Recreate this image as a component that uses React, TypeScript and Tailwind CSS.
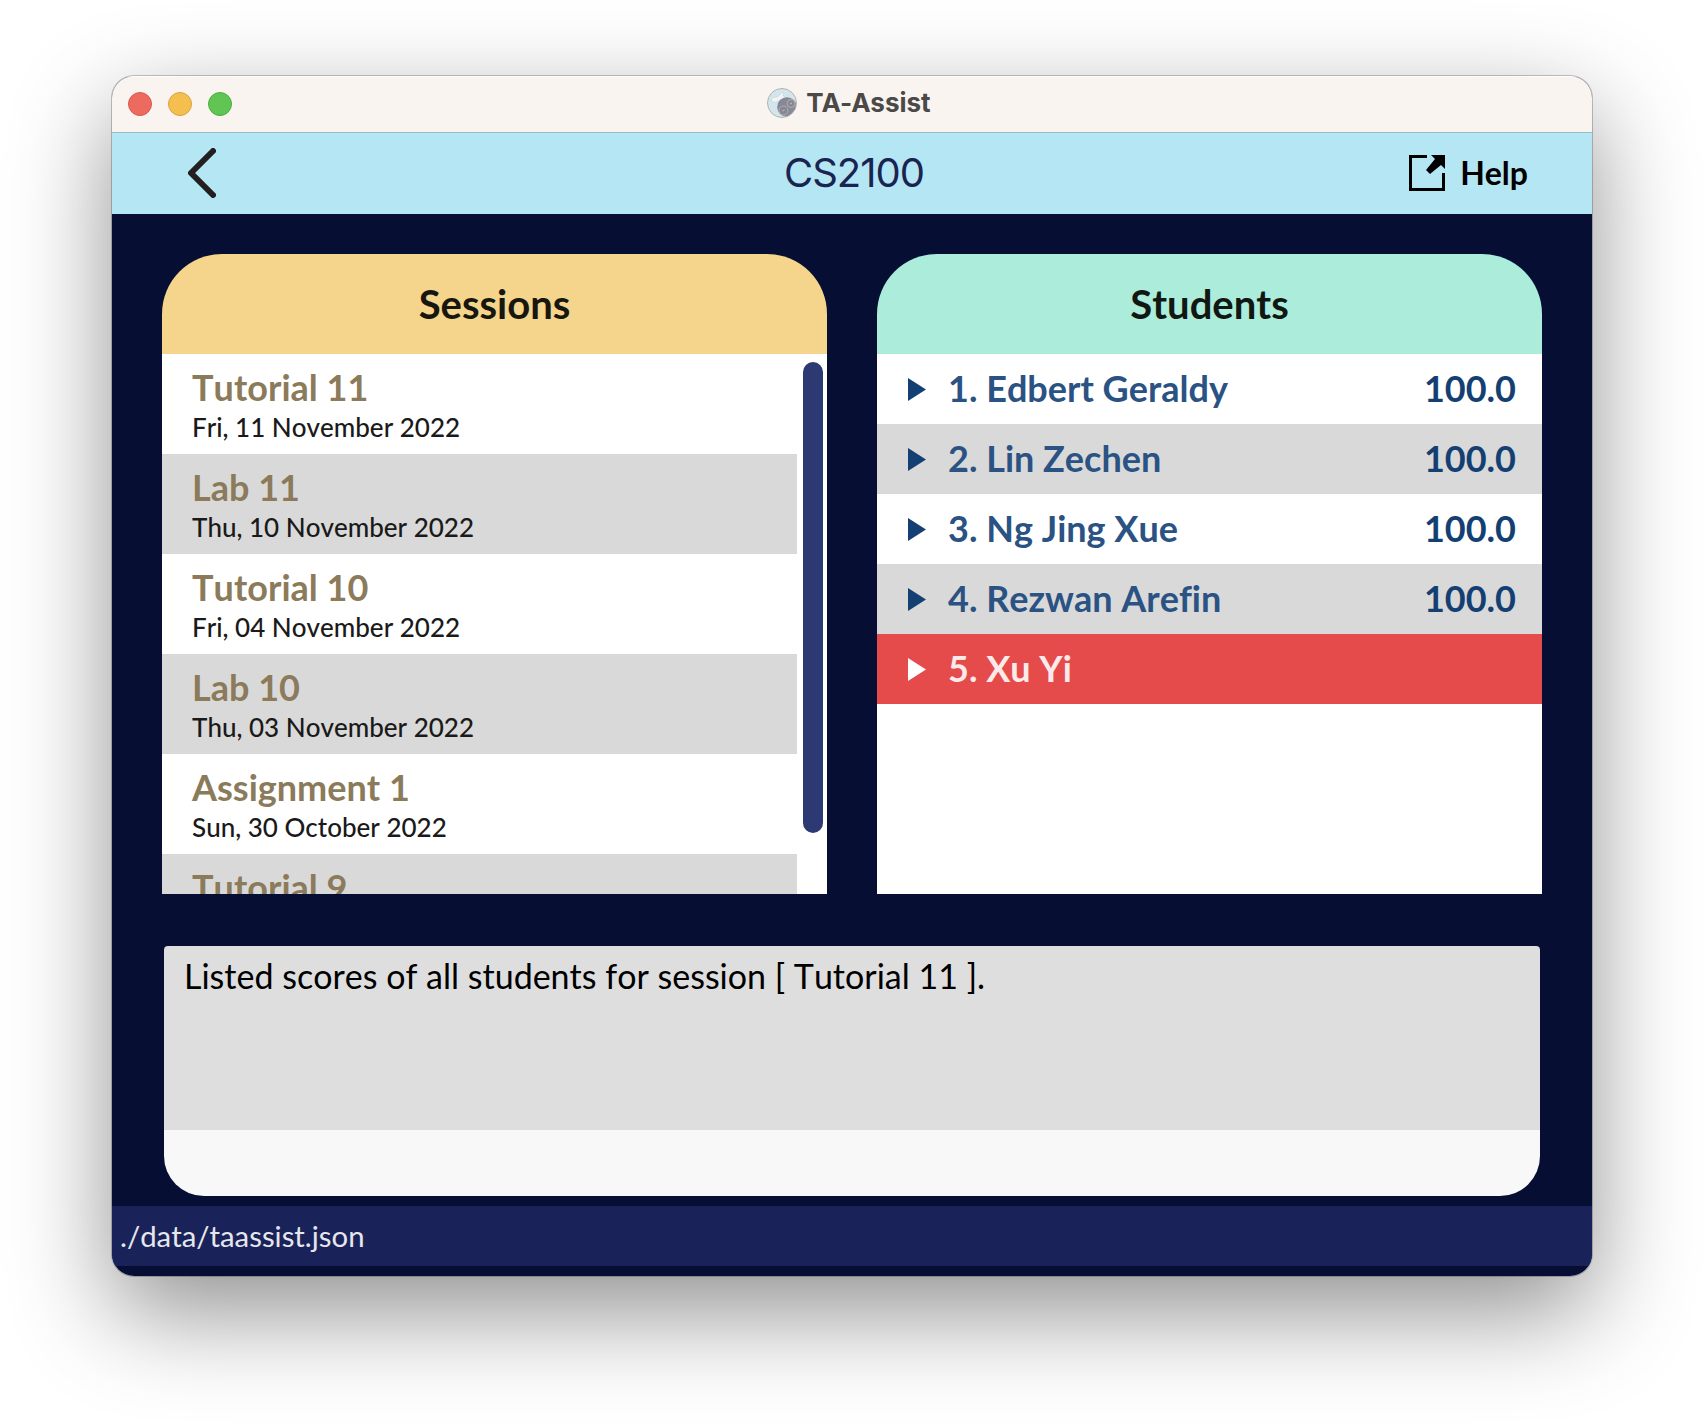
const sessions = [
  { name: "Tutorial 11", date: "Fri, 11 November 2022" },
  { name: "Lab 11", date: "Thu, 10 November 2022" },
  { name: "Tutorial 10", date: "Fri, 04 November 2022" },
  { name: "Lab 10", date: "Thu, 03 November 2022" },
  { name: "Assignment 1", date: "Sun, 30 October 2022" },
  { name: "Tutorial 9", date: "" },
];

const students = [
  { name: "Edbert Geraldy", score: "100.0" },
  { name: "Lin Zechen", score: "100.0" },
  { name: "Ng Jing Xue", score: "100.0" },
  { name: "Rezwan Arefin", score: "100.0" },
  { name: "Xu Yi", score: "" },
];

function AppLogo() {
  return (
    <svg className="h-8 w-8" viewBox="0 0 32 32">
      <defs>
        <clipPath id="disc">
          <circle cx="16" cy="16" r="14.5" />
        </clipPath>
      </defs>
      <circle cx="16" cy="16" r="14.5" fill="#d3e6eb" />
      <g clipPath="url(#disc)">
        <path d="M14 33 33 15v18z" fill="#f5e3b5" />
        <path d="M5.500 12c2-3 5-1 7-3 2-1 2-4 4-4 2 1 0 3 1 4 2 1 2 3-1 3.500-3 0-4 2-6 2.500-3 1-5 0-5-3z" fill="#eff4f5" stroke="#c0ced3" strokeWidth=".6" />
        <circle cx="21" cy="20" r="9.800" fill="#85879a" />
        <circle cx="25" cy="16.500" r="4" fill="none" stroke="#bdae96" strokeWidth="1" />
        <circle cx="17.500" cy="23.500" r="4.500" fill="none" stroke="#bdae96" strokeWidth="1" />
        <path d="m24 17 2-1M16.500 24l2-1" stroke="#c5c3c4" strokeWidth="1" />
      </g>
      <circle cx="16" cy="16" r="14.500" fill="none" stroke="#b0b2b5" strokeWidth="1" />
    </svg>
  );
}

function TitleBar() {
  return (
    <div className="grid h-14 grid-cols-3 items-center bg-[#faf4f1] shadow-[inset_0_1px_0_#ffffff]">
      <div className="flex gap-4 pl-4">
        <span className="h-6 w-6 rounded-full border border-[#d8584e] bg-[#ed6a5e]" />
        <span className="h-6 w-6 rounded-full border border-[#d8a13a] bg-[#f5bf4f]" />
        <span className="h-6 w-6 rounded-full border border-[#4dab3f] bg-[#61c554]" />
      </div>
      <div className="flex items-center justify-center gap-2 pb-[3px] pr-[7px] font-['Inter'] text-[26px] font-bold text-[#4a4948] [font-kerning:normal]">
        <AppLogo />
        <span>TA-Assist</span>
      </div>
    </div>
  );
}

function Header() {
  return (
    <header className="grid h-[82px] grid-cols-3 items-center border-t border-[#8fbfce] bg-[#b5e6f4] pb-0.5">
      <div className="pl-[76px]">
        <svg className="h-[50px] w-[28px]" viewBox="0 0 28 50" fill="none" stroke="#231f20" strokeWidth="6" strokeLinecap="round" strokeLinejoin="round">
          <path d="M25 3 3 25l22 22" />
        </svg>
      </div>
      <div className="pl-1 text-center font-['Inter'] text-[40px] leading-none tracking-[-1px] text-[#1a2451]">CS2100</div>
      <div className="flex items-center justify-end gap-[15px] pr-16">
        <svg className="h-9 w-9" viewBox="0 0 36 36">
          <path d="M18 1.500H1.500v33h33V18" fill="none" stroke="#000" strokeWidth="3" />
          <path d="M22 0h14v14l-4-4L21 19l-4-4 9-11z" />
        </svg>
        <span className="pt-px text-[32px] font-bold leading-none text-black">Help</span>
      </div>
    </header>
  );
}

function SessionsPanel() {
  return (
    <section className="flex h-[640px] flex-1 flex-col">
      <h2 className="flex h-[100px] items-center justify-center rounded-t-[60px] bg-[#f5d48b] text-[40px] font-bold text-[#18170f]">Sessions</h2>
      <div className="flex h-[540px] bg-white">
        <ul className="w-[635px] overflow-hidden">
          {sessions.map((s) => (
            <li key={s.name} className="h-[100px] bg-white pl-[30px] pt-3 even:bg-[#d9d9d9]">
              <div className="mb-px text-[36px] font-bold leading-[42px] text-[#8b7b5a]">{s.name}</div>
              <div className="text-[26px] font-medium leading-[36px] text-[#1a1a1a]">{s.date}</div>
            </li>
          ))}
        </ul>
        <div className="ml-1.5 mt-2 h-[471px] w-5 rounded-full bg-[#2c3972]" />
      </div>
    </section>
  );
}

function StudentsPanel() {
  return (
    <section className="flex h-[640px] flex-1 flex-col">
      <h2 className="flex h-[100px] items-center justify-center rounded-t-[60px] bg-[#abedda] text-[40px] font-bold text-[#111814]">Students</h2>
      <ul className="h-[540px] bg-white">
        {students.map((s, i) => (
          <li
            key={s.name}
            className="flex h-[70px] items-center bg-white pl-[31px] pr-[26px] text-[36px] font-bold text-[#2a5283] even:bg-[#d9d9d9] last:bg-[#e54b4b] last:text-[#fce9e9]"
          >
            <svg className={i === 4 ? "h-[23px] w-[18px] text-white" : "h-[23px] w-[18px] text-[#143f73]"} viewBox="0 0 18 23">
              <path d="M0 0l18 11.500L0 23z" fill="currentColor" />
            </svg>
            <span className="ml-[22px] flex-1 pb-0.5">{`${i + 1}. ${s.name}`}</span>
            <span className="pb-0.5 text-[#143f73]">{s.score}</span>
          </li>
        ))}
      </ul>
    </section>
  );
}

export default function App() {
  return (
    <div className="h-[1424px] w-[1704px] overflow-hidden bg-white px-28 pt-[76px] font-['Lato',sans-serif] [font-kerning:none] [font-variant-ligatures:none]">
      <div className="rounded-[22px] shadow-[0_0_0_1px_rgba(0,0,0,0.22),0_36px_100px_rgba(0,0,0,0.44)]">
        <main className="flex h-[1200px] w-[1480px] flex-col overflow-hidden rounded-[22px] bg-[#060e34]">
          <TitleBar />
          <Header />
          <div className="flex gap-[50px] px-[50px] pt-10">
            <SessionsPanel />
            <StudentsPanel />
          </div>
          <div className="mx-[52px] mt-[52px] h-[184px] rounded-t bg-[#dedede] px-5 pt-2 text-[34px] leading-[44px] text-black">
            Listed scores of all students for session [ Tutorial 11 ].
          </div>
          <div className="mx-[52px] h-[66px] rounded-b-[40px] bg-[#f8f8f8]" />
          <footer className="mt-2.5 flex h-[60px] items-center bg-[#1a2359] pl-2 text-[29.33px] text-[#e6e7ec]">./data/taassist.json</footer>
        </main>
      </div>
    </div>
  );
}
